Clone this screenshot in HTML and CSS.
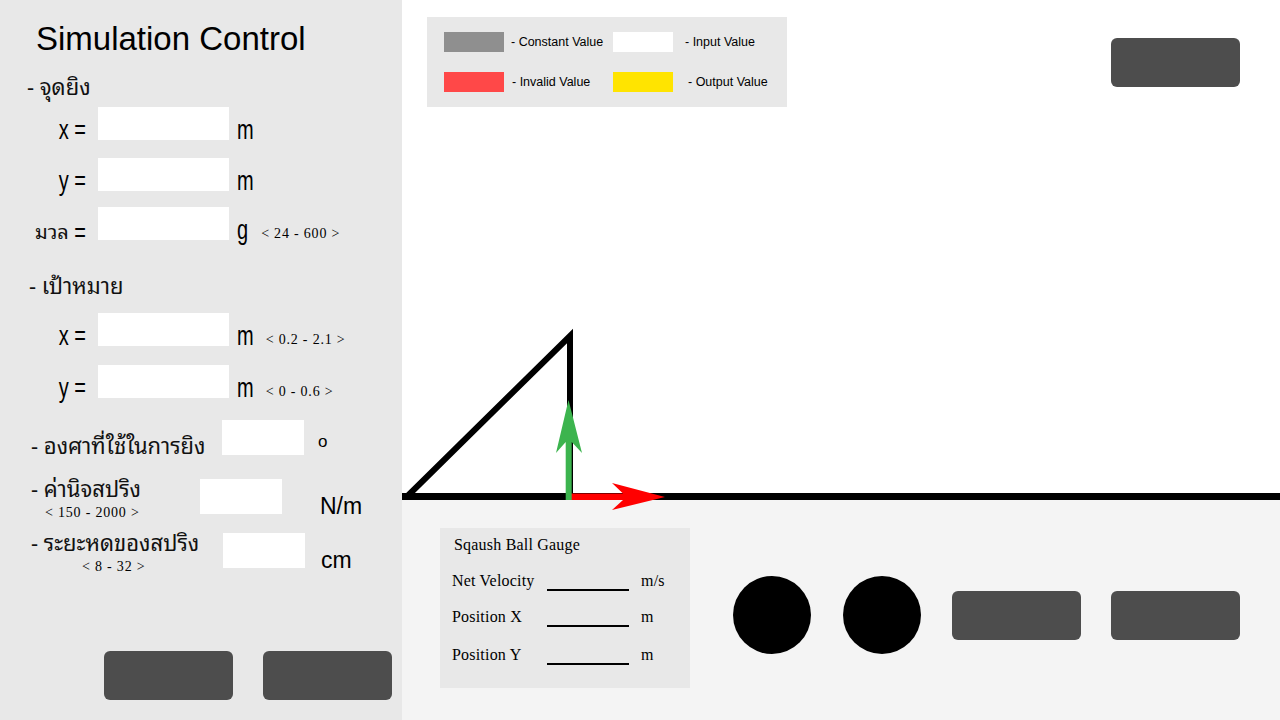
FILE: index.html
```html
<!DOCTYPE html>
<html lang="th">
<head>
<meta charset="utf-8">
<title>Simulation Control</title>
<link rel="stylesheet" href="styles.css">
</head>
<body>
<div class="app">
  <aside class="panel">
    <h1 class="title">Simulation Control</h1>

    <div class="section sec-shoot">- จุดยิง</div>
    <div class="field f-1"><span class="lbl"><span class="tall">x =</span></span><span class="box"></span><span class="unit tall">m</span></div>
    <div class="field f-2"><span class="lbl"><span class="tall">y =</span></span><span class="box"></span><span class="unit tall">m</span></div>
    <div class="field f-3"><span class="lbl"><span class="th">มวล</span>&nbsp;<span class="tall">=</span></span><span class="box"></span><span class="unit tall">g</span><span class="range">&lt; 24 - 600 &gt;</span></div>

    <div class="section sec-target">- เป้าหมาย</div>
    <div class="field f-4"><span class="lbl"><span class="tall">x =</span></span><span class="box"></span><span class="unit tall">m</span><span class="range range-wide">&lt; 0.2 - 2.1 &gt;</span></div>
    <div class="field f-5"><span class="lbl"><span class="tall">y =</span></span><span class="box"></span><span class="unit tall">m</span><span class="range range-wide">&lt; 0 - 0.6 &gt;</span></div>

    <div class="wide-row w-angle">
      <span class="wlbl wl-angle"><span class="wmain">- องศาที่ใช้ในการยิง</span></span>
      <span class="box box-s"></span>
      <span class="deg">o</span>
    </div>
    <div class="wide-row w-spring">
      <span class="wlbl wl-spring"><span class="wmain">- ค่านิจสปริง</span><span class="range sub sub-k">&lt; 150 - 2000 &gt;</span></span>
      <span class="box box-s"></span>
      <span class="unit-big u-nm">N/m</span>
    </div>
    <div class="wide-row w-comp">
      <span class="wlbl wl-comp"><span class="wmain">- ระยะหดของสปริง</span><span class="range sub sub-c">&lt; 8 - 32 &gt;</span></span>
      <span class="box box-s"></span>
      <span class="unit-big u-cm">cm</span>
    </div>

    <div class="panel-actions">
      <span class="btn"></span>
      <span class="btn"></span>
    </div>
  </aside>

  <main class="main">
    <section class="stage">
      <div class="stage-top">
        <div class="legend">
          <span class="sw sw-const"></span><span class="lg lg-1">- Constant Value</span>
          <span class="sw sw-input"></span><span class="lg lg-2">- Input Value</span>
          <span class="sw sw-invalid"></span><span class="lg lg-3">- Invalid Value</span>
          <span class="sw sw-output"></span><span class="lg lg-4">- Output Value</span>
        </div>
        <span class="btn btn-top"></span>
      </div>
      <svg class="diagram" viewBox="0 0 878 512" width="878" height="512">
        <rect x="0" y="493" width="878" height="7" fill="#000"/>
        <polyline points="5,496.5 168,336 168,496" fill="none" stroke="#000" stroke-width="6" stroke-linejoin="miter" stroke-miterlimit="10"/>
        <polygon points="164,493.5 221,493.5 210,483 263,497 210,510 221,500 164,500" fill="#ff0000"/>
        <polygon points="166.5,400 180,453 169.7,442 169.7,500 163.7,500 163.7,442 154,453" fill="#3cb44e"/>
      </svg>
    </section>

    <section class="dock">
      <div class="gauge">
        <div class="g-title">Sqaush Ball Gauge</div>
        <div class="g-row"><span class="g-lbl">Net Velocity</span><span class="g-line"></span><span class="g-unit">m/s</span></div>
        <div class="g-row"><span class="g-lbl">Position X</span><span class="g-line"></span><span class="g-unit">m</span></div>
        <div class="g-row g-last"><span class="g-lbl">Position Y</span><span class="g-line"></span><span class="g-unit">m</span></div>
      </div>
      <div class="controls">
        <span class="knob"></span>
        <span class="knob"></span>
        <span class="btn"></span>
        <span class="btn"></span>
      </div>
    </section>
  </main>
</div>
</body>
</html>
```

FILE: styles.css
```css
html, body {
  margin: 0;
  padding: 0;
}
body {
  width: 1280px;
  height: 720px;
  overflow: hidden;
  font-family: "Liberation Sans", Arial, "Noto Sans Thai", "Noto Sans", sans-serif;
  color: #000;
  background: #fff;
}
.app {
  display: grid;
  grid-template-columns: 402px 878px;
  height: 720px;
}

/* ---------- left panel ---------- */
.panel {
  background: #e8e8e8;
  display: flex;
  flex-direction: column;
  padding-top: 20px;
  box-sizing: border-box;
  height: 720px;
}
.title {
  margin: 0 0 0 36px;
  font-size: 33px;
  font-weight: normal;
  line-height: 38px;
  height: 38px;
  white-space: nowrap;
}
.section, .th, .wmain {
  font-family: "Noto Sans Thai Looped", "Noto Serif Thai", "Tlwg Typo", "Garuda", "Loma", "Waree", "Noto Sans Thai", "Liberation Sans", sans-serif;
  color: #111;
}
.section {
  font-size: 22px;
  line-height: 28px;
  height: 28px;
  white-space: nowrap;
}
.sec-shoot { margin: 13px 0 0 27px; }
.sec-target { margin: 30px 0 0 29px; }

.field {
  display: flex;
  align-items: center;
  height: 33px;
}
.f-1 { margin-top: 8px; }
.f-2 { margin-top: 18px; }
.f-3 { margin-top: 16px; }
.f-4 { margin-top: 15px; }
.f-5 { margin-top: 19px; }

.lbl {
  width: 98px;
  box-sizing: border-box;
  padding-right: 12px;
  text-align: right;
  font-size: 20px;
  white-space: nowrap;
}
.th {
  font-size: 20px;
  display: inline-block;
  transform: translateY(6px);
}
.tall {
  display: inline-block;
  font-family: "Liberation Sans", Arial, sans-serif;
  font-size: 20px;
  transform: translateY(7px) scaleY(1.4);
  transform-origin: center 60%;
}
.box {
  display: block;
  width: 131px;
  height: 33px;
  background: #fff;
  flex: none;
}
.unit {
  margin-left: 8px;
}
.range {
  font-family: "Liberation Serif", "Times New Roman", serif;
  font-size: 14px;
  letter-spacing: 0.8px;
  margin-left: 13px;
  white-space: nowrap;
  padding-top: 20px;
}
.range-wide { margin-left: 12px; }

.wide-row {
  display: flex;
  align-items: flex-start;
  height: 35px;
  margin-left: 31px;
}
.w-angle { margin-top: 22px; }
.w-spring { margin-top: 24px; }
.w-comp { margin-top: 19px; }

.wlbl {
  display: flex;
  flex-direction: column;
  white-space: nowrap;
  flex: none;
}
.wmain {
  font-size: 22px;
  line-height: 30px;
  display: block;
}
.wl-angle { width: 191px; margin-top: 9px; }
.wl-spring { width: 169px; margin-top: -7px; }
.wl-comp { width: 192px; margin-top: -7px; }
.sub {
  margin-left: 0;
  padding-top: 3px;
  line-height: 16px;
}
.sub-k { margin-left: 14px; }
.sub-c { margin-left: 51px; }

.box-s {
  width: 82px;
  height: 35px;
}
.deg {
  margin-left: 14px;
  font-size: 17px;
  line-height: 20px;
  padding-top: 12px;
}
.unit-big {
  font-size: 23px;
  line-height: 26px;
  padding-top: 14px;
}
.u-nm { margin-left: 38px; }
.u-cm { margin-left: 16px; }

.panel-actions {
  display: flex;
  gap: 30px;
  margin: 83px 0 0 104px;
}

.btn {
  display: block;
  width: 129px;
  height: 49px;
  background: #4d4d4d;
  border-radius: 6px;
  flex: none;
}

/* ---------- main area ---------- */
.main {
  display: flex;
  flex-direction: column;
  height: 720px;
}
.stage {
  position: relative;
  height: 500px;
  background: #fff;
  flex: none;
}
.stage-top {
  display: flex;
  justify-content: space-between;
  align-items: flex-start;
  padding: 17px 40px 0 25px;
}
.legend {
  width: 360px;
  height: 90px;
  box-sizing: border-box;
  background: #e8e8e8;
  padding: 15px 0 0 17px;
  display: grid;
  grid-template-columns: 60px 109px 60px auto;
  grid-template-rows: 20px 20px;
  row-gap: 20px;
  align-items: center;
  font-size: 12.5px;
  white-space: nowrap;
}
.sw { display: block; width: 60px; height: 20px; }
.sw-const { background: #8f8f8f; }
.sw-input { background: #fff; }
.sw-invalid { background: #ff4848; }
.sw-output { background: #ffe400; }
.lg-1 { padding-left: 7px; }
.lg-2 { padding-left: 12px; }
.lg-3 { padding-left: 8px; }
.lg-4 { padding-left: 15px; }
.btn-top { margin-top: 21px; }

.diagram {
  position: absolute;
  left: 0;
  top: 0;
  overflow: visible;
  z-index: 2;
  pointer-events: none;
}

.dock {
  flex: 1;
  background: #f4f4f4;
  display: flex;
  align-items: flex-start;
  padding-left: 38px;
}
.gauge {
  width: 250px;
  height: 160px;
  box-sizing: border-box;
  margin-top: 28px;
  background: #e8e8e8;
  padding: 7px 0 0 12px;
  font-family: "Liberation Serif", "Times New Roman", serif;
  font-size: 16px;
  letter-spacing: 0.2px;
}
.g-title {
  line-height: 20px;
  margin-left: 2px;
}
.g-row {
  display: flex;
  align-items: flex-end;
  height: 20px;
  line-height: 20px;
  margin-top: 16px;
}
.g-last { margin-top: 18px; }
.g-lbl { width: 95px; white-space: nowrap; }
.g-line {
  display: block;
  width: 82px;
  height: 0;
  border-bottom: 2px solid #000;
  margin-bottom: 0;
}
.g-unit { margin-left: 12px; }

.controls {
  display: flex;
  align-items: center;
  margin: 76px 0 0 43px;
}
.knob {
  display: block;
  width: 78px;
  height: 78px;
  border-radius: 50%;
  background: #000;
  flex: none;
  margin-right: 32px;
}
.controls .knob + .knob { margin-right: 31px; }
.controls .btn + .btn { margin-left: 30px; }
```
